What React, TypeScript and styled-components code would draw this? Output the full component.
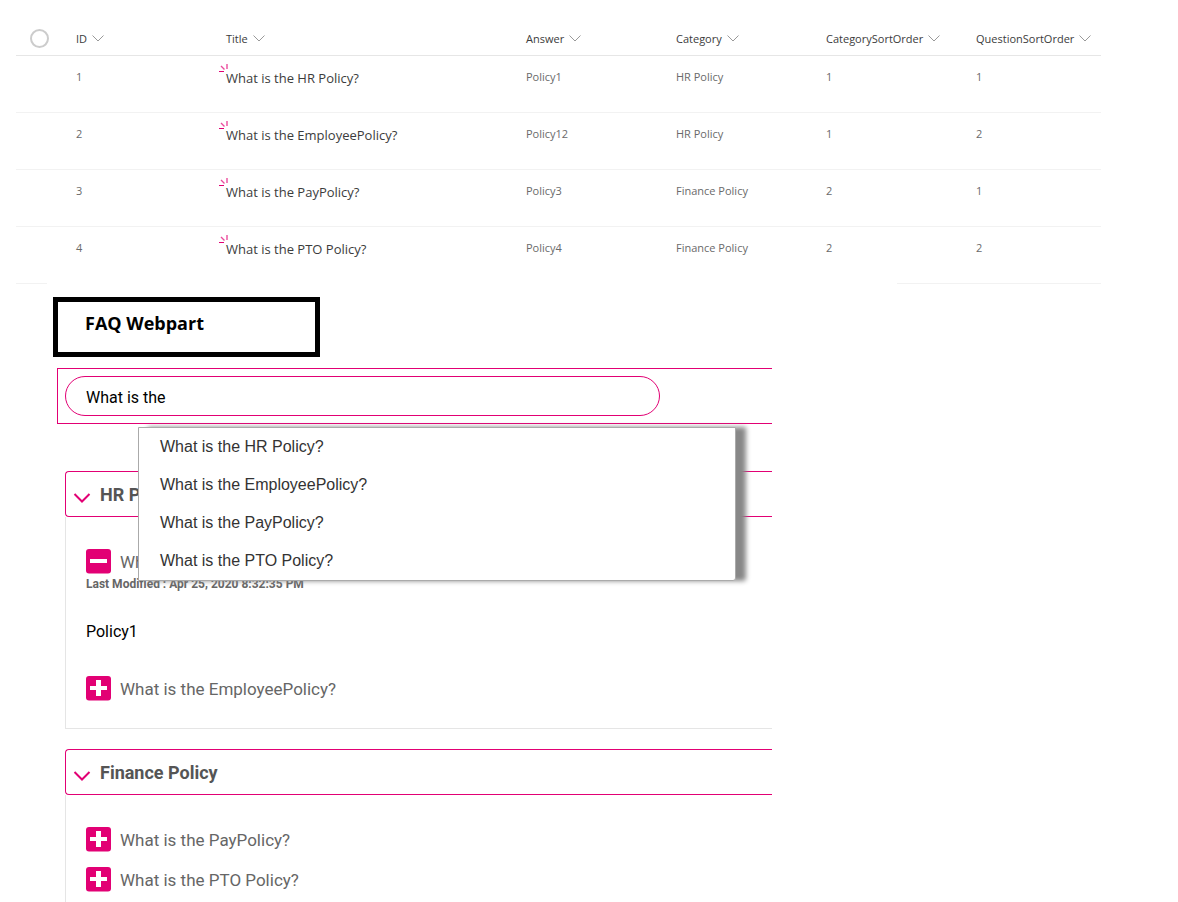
import React, { useState } from "react";
import styled, { createGlobalStyle } from "styled-components";

const magenta = "#e20074";
const listFont = `"Open Sans", "Noto Sans", sans-serif`;
const faqFont = `Roboto, "Liberation Sans", sans-serif`;

const GlobalStyle = createGlobalStyle`
  *, *::before, *::after { box-sizing: border-box; }
  body { margin: 0; background: #fff; font-family: ${faqFont}; }
  button, input { font: inherit; color: inherit; }
`;

const Page = styled.main`
  padding: 21px 16px 0;
`;

const ListTable = styled.table`
  width: 100%;
  max-width: 1085px;
  table-layout: fixed;
  border-collapse: separate;
  border-spacing: 0;
  font-family: ${listFont};
  font-size: 11px;
`;

const Column = styled.col<{ $width?: number }>`
  width: ${({ $width }) => ($width ? `${$width}px` : "auto")};
`;

const HeadCell = styled.th<{ $select?: boolean }>`
  height: 35px;
  padding: ${({ $select }) => ($select ? "0 0 0 14px" : "2px 0 0")};
  border-bottom: 1px solid #e6e6e6;
  text-align: left;
  vertical-align: middle;
  font-weight: 400;
`;

const SelectAll = styled.input`
  display: block;
  appearance: none;
  width: 19px;
  height: 19px;
  margin: 0;
  border: 2px solid #ccc;
  border-radius: 50%;
`;

const SortButton = styled.button`
  display: flex;
  align-items: center;
  gap: 5px;
  padding: 0;
  border: 0;
  background: none;
  color: #3c3c3c;
  line-height: 18px;
  white-space: nowrap;
`;

const Cell = styled.td`
  height: 57px;
  padding: 12px 0 0;
  border-bottom: 1px solid #f2f2f2;
  color: #6a6a6a;
  line-height: 18px;
  vertical-align: top;
`;

const TitleCell = styled(Cell)`
  color: #3c3c3c;
  font-size: 13px;
  line-height: 20px;
`;

const TitleText = styled.span`
  position: relative;
`;

const NewMark = styled.svg`
  position: absolute;
  left: -7px;
  top: -6px;
`;

const Webpart = styled.section`
  position: relative;
  width: 100%;
  max-width: 850px;
  margin: -1px 0 0 31px;
  padding: 14px 125px 0 6px;
  background: #fff;
`;

const WebpartTitle = styled.h1`
  width: 267px;
  height: 60px;
  margin: 0 0 11px;
  padding: 9px 27px;
  border: 5px solid #000;
  color: #000;
  font: 700 18px/24px ${listFont};
`;

const SearchFrame = styled.form`
  position: relative;
  margin: 0 0 47px 4px;
  padding: 7px 112px 7px 7px;
  border: 1px solid ${magenta};
  border-right: 0;
`;

const SearchInput = styled.input`
  display: block;
  width: 100%;
  height: 40px;
  padding: 2px 20px 0;
  border: 1px solid ${magenta};
  border-radius: 20px;
  outline: 0;
  background: #fff;
  color: #000;
  font-size: 16px;
`;

const Suggestions = styled.ul`
  position: absolute;
  z-index: 1;
  left: 80px;
  right: 36px;
  top: 58px;
  margin: 0;
  padding: 0;
  border: 1px solid #aaa;
  border-radius: 0 0 3px 0;
  background: #fff;
  box-shadow: 10px 0 5px #888;
  list-style: none;
`;

const Suggestion = styled.button`
  display: block;
  width: 100%;
  height: 38px;
  padding: 0 21px;
  border: 0;
  background: none;
  color: #333;
  font: 16px/38px "Liberation Sans", Arial, sans-serif;
  text-align: left;
`;

const Group = styled.section`
  margin: 0 0 20px 12px;
`;

const GroupHeading = styled.h2`
  margin: 0;
  font-size: 18px;
`;

const GroupToggle = styled.button`
  display: flex;
  align-items: center;
  gap: 9px;
  width: 100%;
  height: 46px;
  padding: 0 7px;
  border: 1px solid ${magenta};
  border-right: 0;
  border-radius: 4px 0 0 4px;
  background: #fff;
  color: #555;
  font-weight: 700;
  text-align: left;
`;

const GroupBody = styled.div`
  display: flex;
  flex-direction: column;
  gap: 15px;
  padding: 32px 20px 27px;
  border-left: 1px solid #e5e5e5;
  border-bottom: 1px solid #e5e5e5;
`;

const QuestionToggle = styled.button`
  display: flex;
  align-items: center;
  gap: 9px;
  height: 25px;
  padding: 0;
  border: 0;
  background: none;
  color: #666;
  font-size: 17px;
  white-space: nowrap;
`;

const Modified = styled.p`
  margin: 0;
  color: #666;
  font-size: 12px;
  font-weight: 700;
  line-height: 20px;
`;

const Answer = styled.p`
  margin: 0;
  padding: 28px 0 19px;
  color: #000;
  font-size: 16px;
  line-height: 20px;
`;

interface Faq {
  id: number;
  title: string;
  answer: string;
  category: string;
  categoryOrder: number;
  questionOrder: number;
}

const faqs: Faq[] = [
  { id: 1, title: "What is the HR Policy?", answer: "Policy1", category: "HR Policy", categoryOrder: 1, questionOrder: 1 },
  { id: 2, title: "What is the EmployeePolicy?", answer: "Policy12", category: "HR Policy", categoryOrder: 1, questionOrder: 2 },
  { id: 3, title: "What is the PayPolicy?", answer: "Policy3", category: "Finance Policy", categoryOrder: 2, questionOrder: 1 },
  { id: 4, title: "What is the PTO Policy?", answer: "Policy4", category: "Finance Policy", categoryOrder: 2, questionOrder: 2 },
];

const columns = ["ID", "Title", "Answer", "Category", "CategorySortOrder", "QuestionSortOrder"];
const categories = ["HR Policy", "Finance Policy"];

const SortChevron = () => (
  <svg width="12" height="8" viewBox="0 0 12 8" fill="none" stroke="#999" aria-hidden="true">
    <path d="M.5 .5 6 6 11.5 .5" />
  </svg>
);

const GroupChevron = () => (
  <svg width="18" height="18" viewBox="0 0 18 18" fill="none" stroke={magenta} strokeWidth="2" aria-hidden="true">
    <path d="M1.5 9 9 16.5 16.5 9" />
  </svg>
);

const ToggleIcon = ({ open }: { open: boolean }) => (
  <svg width="25" height="25" viewBox="0 0 25 25" aria-hidden="true">
    <rect width="25" height="24.5" rx="3" fill={magenta} />
    <path d={open ? "M4 10h17v4H4z" : "M10 4h5v6h6v4h-6v6h-5v-6H4v-4h6z"} fill="#fff" />
  </svg>
);

const SparkMark = () => (
  <NewMark width="10" height="10" viewBox="0 0 10 10" fill="none" stroke={magenta} aria-label="New">
    <path d="M0 8.500h5" />
    <path d="M2 3 5.500 6.500M8 1v5" strokeOpacity=".7" strokeWidth="1.4" />
  </NewMark>
);

export default function App() {
  const [query, setQuery] = useState("What is the");
  const [openId, setOpenId] = useState<number | null>(1);
  const matches = faqs.filter((f) => query && f.title.toLowerCase().includes(query.toLowerCase()));

  return (
    <Page>
      <GlobalStyle />
      <ListTable>
        <colgroup>
          <Column $width={60} />
          <Column $width={150} />
          <Column $width={300} />
          <Column $width={150} />
          <Column $width={150} />
          <Column $width={150} />
          <Column />
        </colgroup>
        <thead>
          <tr>
            <HeadCell $select>
              <SelectAll type="checkbox" aria-label="Select all items" />
            </HeadCell>
            {columns.map((name) => (
              <HeadCell key={name} scope="col">
                <SortButton type="button">
                  {name}
                  <SortChevron />
                </SortButton>
              </HeadCell>
            ))}
          </tr>
        </thead>
        <tbody>
          {faqs.map((f) => (
            <tr key={f.id}>
              <Cell />
              <Cell>{f.id}</Cell>
              <TitleCell>
                <TitleText>
                  <SparkMark />
                  {f.title}
                </TitleText>
              </TitleCell>
              <Cell>{f.answer}</Cell>
              <Cell>{f.category}</Cell>
              <Cell>{f.categoryOrder}</Cell>
              <Cell>{f.questionOrder}</Cell>
            </tr>
          ))}
        </tbody>
      </ListTable>

      <Webpart>
        <WebpartTitle>FAQ Webpart</WebpartTitle>
        <SearchFrame onSubmit={(e) => e.preventDefault()}>
          <SearchInput
            type="text"
            aria-label="Search questions"
            value={query}
            onChange={(e) => setQuery(e.target.value)}
          />
          {matches.length > 0 && (
            <Suggestions>
              {matches.map((f) => (
                <li key={f.id}>
                  <Suggestion type="button" onClick={() => setQuery(f.title)}>
                    {f.title}
                  </Suggestion>
                </li>
              ))}
            </Suggestions>
          )}
        </SearchFrame>

        {categories.map((category) => (
          <Group key={category}>
            <GroupHeading>
              <GroupToggle type="button" aria-expanded>
                <GroupChevron />
                {category}
              </GroupToggle>
            </GroupHeading>
            <GroupBody>
              {faqs
                .filter((f) => f.category === category)
                .map((f) => (
                  <div key={f.id}>
                    <QuestionToggle
                      type="button"
                      aria-expanded={openId === f.id}
                      onClick={() => setOpenId(openId === f.id ? null : f.id)}
                    >
                      <ToggleIcon open={openId === f.id} />
                      {f.title}
                    </QuestionToggle>
                    {openId === f.id && (
                      <>
                        <Modified>Last Modified : Apr 25, 2020 8:32:35 PM</Modified>
                        <Answer>{f.answer}</Answer>
                      </>
                    )}
                  </div>
                ))}
            </GroupBody>
          </Group>
        ))}
      </Webpart>
    </Page>
  );
}
